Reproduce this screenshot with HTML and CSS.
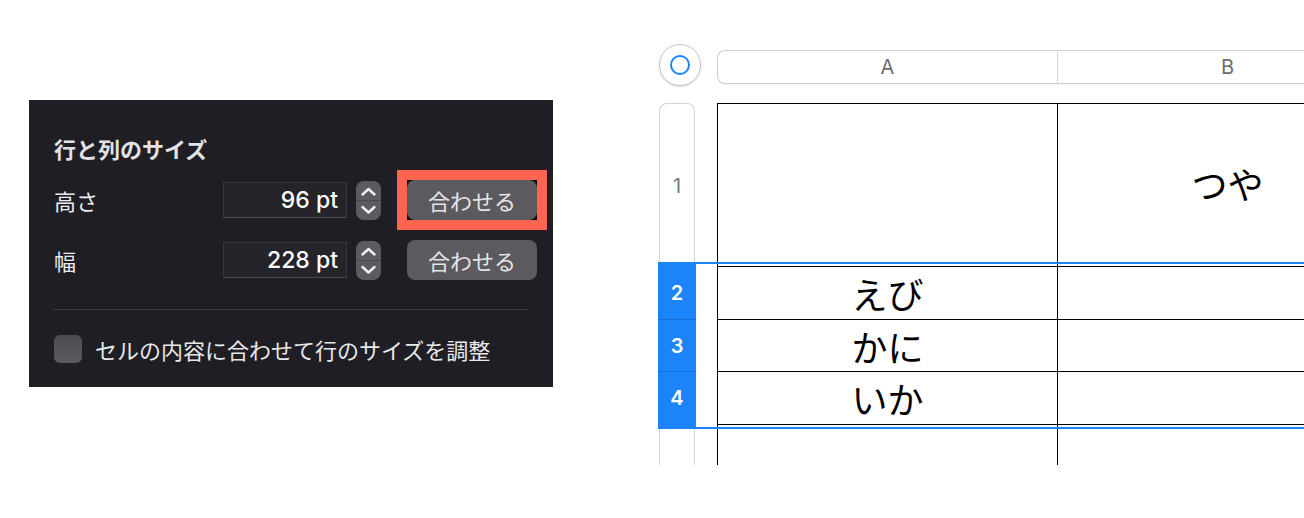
FILE: index.html
```html
<!DOCTYPE html>
<html lang="ja">
<head>
<meta charset="utf-8">
<title>行と列のサイズ</title>
<link rel="stylesheet" href="styles.css">
</head>
<body>
<div class="page">
  <section class="panel">
    <div class="title">行と列のサイズ</div>
    <div class="prow">
      <div class="label">高さ</div>
      <div class="field">96 pt</div>
      <div class="stepper">
        <svg width="25" height="39" viewBox="0 0 25 39"><path d="M6.5 13.5 L12.5 8 L18.5 13.5" /><line x1="0" y1="19.5" x2="25" y2="19.5" class="div"/><path d="M6.5 26 L12.5 31.5 L18.5 26" /></svg>
      </div>
      <div class="mark"><div class="btn">合わせる</div></div>
    </div>
    <div class="prow">
      <div class="label">幅</div>
      <div class="field">228 pt</div>
      <div class="stepper">
        <svg width="25" height="39" viewBox="0 0 25 39"><path d="M6.5 13.5 L12.5 8 L18.5 13.5" /><line x1="0" y1="19.5" x2="25" y2="19.5" class="div"/><path d="M6.5 26 L12.5 31.5 L18.5 26" /></svg>
      </div>
      <div class="btn gap">合わせる</div>
    </div>
    <div class="sep"></div>
    <div class="check">
      <span class="box"></span>
      <span class="clabel">セルの内容に合わせて行のサイズを調整</span>
    </div>
  </section>

  <section class="sheet">
    <div class="sheet-head">
      <div class="select-all"><span class="ring"></span></div>
      <div class="colheads">
        <div class="colhead first">A</div>
        <div class="colhead">B</div>
        <div class="colhead"></div>
      </div>
    </div>
    <div class="sheet-body">
      <div class="srow r1">
        <div class="rh gray top">1</div>
        <div class="cells bt"><div class="cell"></div><div class="cell">つや</div><div class="cell"></div></div>
      </div>
      <div class="sel">
        <div class="srow g2">
          <div class="rh blue"></div>
          <div class="cells"><div class="cell"></div><div class="cell"></div><div class="cell"></div></div>
        </div>
        <div class="srow r2">
          <div class="rh blue">2</div>
          <div class="cells bt"><div class="cell">えび</div><div class="cell"></div><div class="cell"></div></div>
        </div>
        <div class="srow r3">
          <div class="rh blue dv">3</div>
          <div class="cells bt"><div class="cell">かに</div><div class="cell"></div><div class="cell"></div></div>
        </div>
        <div class="srow r4">
          <div class="rh blue dv">4</div>
          <div class="cells bt"><div class="cell">いか</div><div class="cell"></div><div class="cell"></div></div>
        </div>
        <div class="srow g3">
          <div class="rh blue"></div>
          <div class="cells bt"><div class="cell"></div><div class="cell"></div><div class="cell"></div></div>
        </div>
      </div>
      <div class="srow r5">
        <div class="rh gray open"></div>
        <div class="cells"><div class="cell"></div><div class="cell"></div><div class="cell"></div></div>
      </div>
    </div>
  </section>
</div>
</body>
</html>
```

FILE: styles.css
```css
html, body {
  margin: 0;
  padding: 0;
  background: #ffffff;
  overflow: hidden;
}
body {
  font-family: Inter, "Noto Sans CJK JP", sans-serif;
}
.page {
  display: flex;
  align-items: flex-start;
  width: 1304px;
  height: 518px;
}

/* ---------- panel ---------- */
.panel {
  flex: none;
  box-sizing: border-box;
  width: 524px;
  height: 287px;
  margin: 100px 0 0 29px;
  padding: 35px 16px 0 25px;
  background: #1e1e24;
  color: #e6e6e8;
  font-family: "Noto Sans CJK JP", sans-serif;
}
.title {
  font-size: 22px;
  line-height: 26px;
  font-weight: 700;
  color: #e2e2e4;
  margin-bottom: 19px;
}
.prow {
  display: flex;
  align-items: center;
  height: 40px;
}
.prow + .prow {
  margin-top: 20px;
}
.label {
  flex: none;
  width: 169px;
  font-size: 22px;
  line-height: 26px;
  color: #ececee;
}
.field {
  flex: none;
  box-sizing: border-box;
  width: 124px;
  height: 36px;
  padding-right: 8px;
  background: #24242a;
  border: 1px solid #36363b;
  border-bottom-color: #4b4b50;
  font-family: Inter, sans-serif;
  font-size: 23px;
  font-weight: 500;
  line-height: 34px;
  text-align: right;
  color: #ffffff;
}
.stepper {
  flex: none;
  width: 25px;
  height: 39px;
  margin-left: 9px;
  border-radius: 8px;
  background: #5b5b60;
  overflow: hidden;
}
.stepper svg {
  display: block;
}
.stepper path {
  fill: none;
  stroke: #f0f0f2;
  stroke-width: 2.4;
  stroke-linecap: round;
  stroke-linejoin: round;
}
.stepper .div {
  stroke: #47474c;
  stroke-width: 1;
}
.mark {
  flex: none;
  margin-left: 26px;
  background: #0b0b0d;
  outline: 10px solid #fd6552;
}
.btn {
  flex: none;
  box-sizing: border-box;
  width: 130px;
  height: 40px;
  border-radius: 8px;
  background: #5a5a5f;
  color: #e4e4e6;
  font-size: 22px;
  line-height: 40px;
  text-align: center;
}
.btn.gap {
  margin-left: 26px;
}
.sep {
  width: 475px;
  height: 1px;
  margin: 29px 0 0 -1px;
  background: #3a3a40;
}
.check {
  display: flex;
  align-items: center;
  margin-top: 25px;
  height: 28px;
}
.box {
  flex: none;
  width: 28px;
  height: 28px;
  border-radius: 6px;
  background: linear-gradient(#4a4a4f, #5a5a5f);
}
.clabel {
  margin-left: 13px;
  font-size: 22px;
  line-height: 26px;
  color: #e8e8ea;
}

/* ---------- sheet ---------- */
.sheet {
  flex: none;
  width: 646px;
  margin: 44px 0 0 105px;
  overflow: hidden;
}
.sheet-head {
  display: flex;
  align-items: flex-start;
  height: 42px;
}
.select-all {
  flex: none;
  box-sizing: border-box;
  width: 42px;
  height: 42px;
  margin-left: 1px;
  border: 1px solid #c6c6c8;
  border-radius: 50%;
  background: #fff;
  box-shadow: 0 1px 2px rgba(0, 0, 0, 0.15);
  display: flex;
  align-items: center;
  justify-content: center;
}
.ring {
  box-sizing: border-box;
  width: 20px;
  height: 20px;
  border: 2.5px solid #1a84fb;
  border-radius: 50%;
}
.colheads {
  display: flex;
  flex: none;
  height: 34px;
  margin: 6px 0 0 16px;
  box-sizing: border-box;
  border: 1px solid #cfcfd1;
  border-right: none;
  border-radius: 8px 0 0 8px;
  box-shadow: 0 1px 1px rgba(0, 0, 0, 0.06);
}
.colhead {
  box-sizing: border-box;
  flex: none;
  width: 340px;
  border-left: 1px solid #d6d6d8;
  font-size: 20px;
  line-height: 32px;
  text-align: center;
  color: #6d6d72;
}
.colhead.first {
  width: 339px;
  border-left: none;
}
.sheet-body {
  margin-top: 17px;
}
.srow {
  display: flex;
}
.rh {
  flex: none;
  box-sizing: border-box;
  display: flex;
  align-items: center;
  justify-content: center;
  font-size: 20px;
}
.rh.gray {
  width: 36px;
  margin: 0 22px 0 1px;
  border: 1px solid #d3d3d5;
  color: #7a7a7e;
}
.rh.gray.top {
  border-bottom: none;
  border-radius: 8px 8px 0 0;
  padding-top: 6px;
}
.rh.gray.open {
  border-top: none;
  border-bottom: none;
}
.rh.blue {
  width: 38px;
  margin-right: 21px;
  background: #1b84f9;
  color: #ffffff;
  font-weight: 600;
}
.rh.blue.dv {
  border-top: 1px solid #1670d8;
}
.cells {
  display: flex;
  flex: none;
}
.cells.bt {
  border-top: 1px solid #000;
}
.cell {
  box-sizing: border-box;
  flex: none;
  width: 340px;
  border-left: 1px solid #000;
  display: flex;
  align-items: center;
  justify-content: center;
  font-family: "Noto Sans CJK JP", sans-serif;
  font-size: 36px;
  line-height: 1;
  color: #000;
}
.r1 { height: 159px; }
.sel {
  border-top: 2px solid #1b84f9;
  border-bottom: 2px solid #1b84f9;
}
.g2 { height: 2px; }
.r2 { height: 53px; }
.r3 { height: 52px; }
.r4 { height: 53px; }
.g3 { height: 3px; }
.r5 { height: 36px; }
```
